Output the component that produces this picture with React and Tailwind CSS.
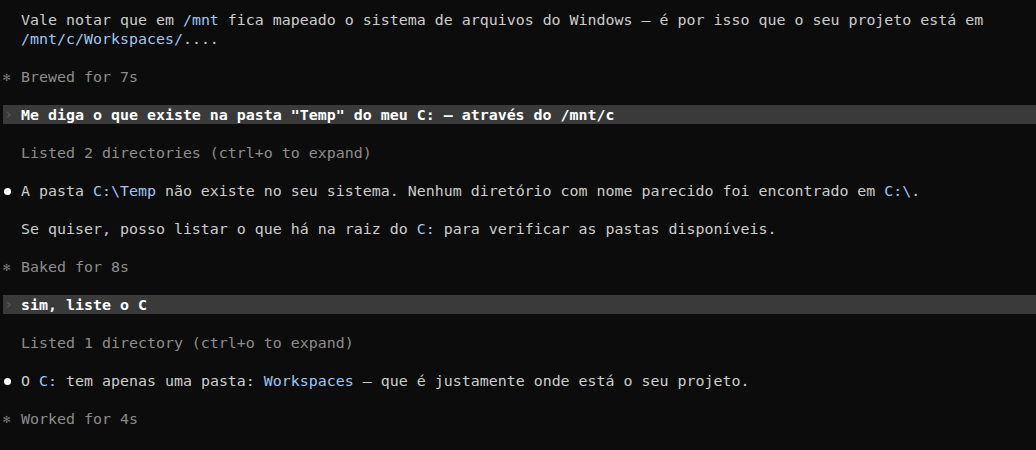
export default function App() {
  const B = ({ children }) => <span className="text-[#9dc6f2]">{children}</span>;

  const Line = ({ marker, children, band, dim }) => (
    <div
      className={`flex h-[19px] leading-[19px] whitespace-pre ${band ? "bg-[#3a3a3a]" : ""}`}
    >
      <span className="w-[18px] flex items-center justify-start shrink-0">
        {marker === "dot" && <span className="ml-[1px] mt-[1px] w-[7px] h-[7px] rounded-full bg-white" />}
        {marker === "star" && <span className="text-[#7a7a7a] text-[12px] leading-[19px] pt-[2px]">✻</span>}
        {marker === "chev" && <span className="ml-[1px] text-[#5c5c5c] leading-[19px]">›</span>}
      </span>
      <span
        className={`pt-[1px] ${
          band ? "text-white font-bold" : dim ? "text-[#8c8c8c]" : "text-[#cccccc]"
        }`}
      >
        {children}
      </span>
    </div>
  );

  const Blank = () => <div className="h-[19px]" />;

  return (
    <div
      className="w-[1036px] h-[450px] bg-[#0c0c0c] pt-[10px] pl-[3px] overflow-hidden text-[14.95px]"
      style={{ fontFamily: '"DejaVu Sans Mono", "Liberation Mono", monospace' }}
    >
      <Line>
        Vale notar que em <B>/mnt</B> fica mapeado o sistema de arquivos do Windows — é por isso que o seu projeto está em
      </Line>
      <Line>
        <B>/mnt/c/Workspaces/</B>....
      </Line>
      <Blank />
      <Line marker="star" dim>Brewed for 7s</Line>
      <Blank />
      <Line marker="chev" band>Me diga o que existe na pasta "Temp" do meu C: – através do /mnt/c</Line>
      <Blank />
      <Line dim>Listed 2 directories (ctrl+o to expand)</Line>
      <Blank />
      <Line marker="dot">
        A pasta <B>C:\Temp</B> não existe no seu sistema. Nenhum diretório com nome parecido foi encontrado em <B>C:\</B>.
      </Line>
      <Blank />
      <Line>
        Se quiser, posso listar o que há na raiz do <B>C:</B> para verificar as pastas disponíveis.
      </Line>
      <Blank />
      <Line marker="star" dim>Baked for 8s</Line>
      <Blank />
      <Line marker="chev" band>sim, liste o C</Line>
      <Blank />
      <Line dim>Listed 1 directory (ctrl+o to expand)</Line>
      <Blank />
      <Line marker="dot">
        O <B>C:</B> tem apenas uma pasta: <B>Workspaces</B> — que é justamente onde está o seu projeto.
      </Line>
      <Blank />
      <Line marker="star" dim>Worked for 4s</Line>
    </div>
  );
}
